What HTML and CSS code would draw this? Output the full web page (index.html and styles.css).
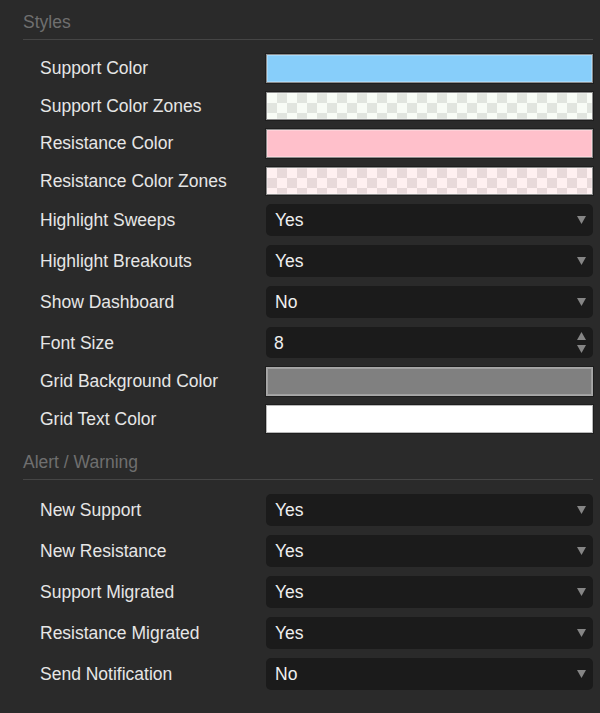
FILE: index.html
```html
<!DOCTYPE html>
<html lang="en">
<head>
  <meta charset="UTF-8">
  <meta name="viewport" content="width=device-width, initial-scale=1.0">
  <title>Indicator Settings</title>
  <link rel="stylesheet" href="styles.css">
</head>
<body>
  <div class="settings-panel">

    <section class="settings-group">
      <h3 class="group-title">Styles</h3>
      <div class="group-rows">
        <div class="setting-row">
          <span class="setting-label">Support Color</span>
          <div class="swatch swatch-support"></div>
        </div>
        <div class="setting-row">
          <span class="setting-label">Support Color Zones</span>
          <div class="swatch swatch-support-zone"></div>
        </div>
        <div class="setting-row">
          <span class="setting-label">Resistance Color</span>
          <div class="swatch swatch-resistance"></div>
        </div>
        <div class="setting-row">
          <span class="setting-label">Resistance Color Zones</span>
          <div class="swatch swatch-resistance-zone"></div>
        </div>
        <div class="setting-row">
          <span class="setting-label">Highlight Sweeps</span>
          <div class="dropdown">
            <span class="dropdown-value">Yes</span>
            <svg class="caret" width="9" height="8" viewBox="0 0 9 8"><path d="M0 0H9L4.5 8Z"/></svg>
          </div>
        </div>
        <div class="setting-row">
          <span class="setting-label">Highlight Breakouts</span>
          <div class="dropdown">
            <span class="dropdown-value">Yes</span>
            <svg class="caret" width="9" height="8" viewBox="0 0 9 8"><path d="M0 0H9L4.5 8Z"/></svg>
          </div>
        </div>
        <div class="setting-row">
          <span class="setting-label">Show Dashboard</span>
          <div class="dropdown">
            <span class="dropdown-value">No</span>
            <svg class="caret" width="9" height="8" viewBox="0 0 9 8"><path d="M0 0H9L4.5 8Z"/></svg>
          </div>
        </div>
        <div class="setting-row">
          <span class="setting-label">Font Size</span>
          <div class="dropdown number-field">
            <span class="dropdown-value">8</span>
            <svg class="spinner" width="9" height="21" viewBox="0 0 9 21"><path d="M4.5 0L9 8H0Z"/><path d="M0 13H9L4.5 21Z"/></svg>
          </div>
        </div>
        <div class="setting-row">
          <span class="setting-label">Grid Background Color</span>
          <div class="swatch swatch-grid-bg"></div>
        </div>
        <div class="setting-row">
          <span class="setting-label">Grid Text Color</span>
          <div class="swatch swatch-grid-text"></div>
        </div>
      </div>
    </section>

    <section class="settings-group">
      <h3 class="group-title">Alert / Warning</h3>
      <div class="group-rows">
        <div class="setting-row">
          <span class="setting-label">New Support</span>
          <div class="dropdown">
            <span class="dropdown-value">Yes</span>
            <svg class="caret" width="9" height="8" viewBox="0 0 9 8"><path d="M0 0H9L4.5 8Z"/></svg>
          </div>
        </div>
        <div class="setting-row">
          <span class="setting-label">New Resistance</span>
          <div class="dropdown">
            <span class="dropdown-value">Yes</span>
            <svg class="caret" width="9" height="8" viewBox="0 0 9 8"><path d="M0 0H9L4.5 8Z"/></svg>
          </div>
        </div>
        <div class="setting-row">
          <span class="setting-label">Support Migrated</span>
          <div class="dropdown">
            <span class="dropdown-value">Yes</span>
            <svg class="caret" width="9" height="8" viewBox="0 0 9 8"><path d="M0 0H9L4.5 8Z"/></svg>
          </div>
        </div>
        <div class="setting-row">
          <span class="setting-label">Resistance Migrated</span>
          <div class="dropdown">
            <span class="dropdown-value">Yes</span>
            <svg class="caret" width="9" height="8" viewBox="0 0 9 8"><path d="M0 0H9L4.5 8Z"/></svg>
          </div>
        </div>
        <div class="setting-row">
          <span class="setting-label">Send Notification</span>
          <div class="dropdown">
            <span class="dropdown-value">No</span>
            <svg class="caret" width="9" height="8" viewBox="0 0 9 8"><path d="M0 0H9L4.5 8Z"/></svg>
          </div>
        </div>
      </div>
    </section>

  </div>
</body>
</html>
```

FILE: styles.css
```css
  body {
    margin: 0;
    background-color: #2a2a2a;
    font-family: "Liberation Sans", Arial, sans-serif;
    font-size: 17.5px;
  }

  .settings-panel {
    padding: 3px 7px 0 23px;
  }

  .settings-group + .settings-group {
    margin-top: 10px;
  }

  .group-title {
    margin: 0;
    padding: 9px 0 7px;
    font-size: 17.5px;
    line-height: 20px;
    font-weight: normal;
    color: #6f6f6f;
    border-bottom: 1px solid #454545;
  }

  .group-rows {
    display: flex;
    flex-direction: column;
    gap: 9px;
    padding: 14px 0 0 17px;
  }

  .setting-row {
    display: flex;
    align-items: center;
  }

  .setting-label {
    flex-shrink: 0;
    width: 226px;
    color: #e6e6e6;
    line-height: 20px;
  }

  .swatch {
    flex: 1;
    height: 28.5px;
    box-sizing: border-box;
    border: 1px solid #8c8c8c;
    box-shadow: 0 0 0 1px #1e1e1e, inset 0 0 0 1px rgba(255, 255, 255, 0.25);
  }

  .swatch-support {
    background-color: #87cefa;
  }

  .swatch-resistance {
    background-color: #ffc0cb;
  }

  .swatch-support-zone {
    background-color: #f8fcf6;
    background-image:
      linear-gradient(45deg, #e1e5df 25%, transparent 25%, transparent 75%, #e1e5df 75%),
      linear-gradient(45deg, #e1e5df 25%, transparent 25%, transparent 75%, #e1e5df 75%);
    background-size: 20px 20px;
    background-position: 0 0, 10px 10px;
  }

  .swatch-resistance-zone {
    background-color: #fff0f1;
    background-image:
      linear-gradient(45deg, #e8d9da 25%, transparent 25%, transparent 75%, #e8d9da 75%),
      linear-gradient(45deg, #e8d9da 25%, transparent 25%, transparent 75%, #e8d9da 75%);
    background-size: 20px 20px;
    background-position: 0 0, 10px 10px;
  }

  .swatch-grid-bg {
    background-color: #808080;
    border-color: #a8a8a8;
  }

  .swatch-grid-text {
    background-color: #ffffff;
    border-color: #b8b8b8;
  }

  .dropdown {
    flex: 1;
    height: 32px;
    display: flex;
    align-items: center;
    justify-content: space-between;
    padding: 0 7px 0 9px;
    background-color: #1b1b1b;
    border-radius: 5px;
  }

  .number-field {
    height: 31px;
    padding-left: 8px;
  }

  .dropdown-value {
    color: #efefef;
    line-height: 20px;
  }

  .caret,
  .spinner {
    fill: #858585;
  }
```
